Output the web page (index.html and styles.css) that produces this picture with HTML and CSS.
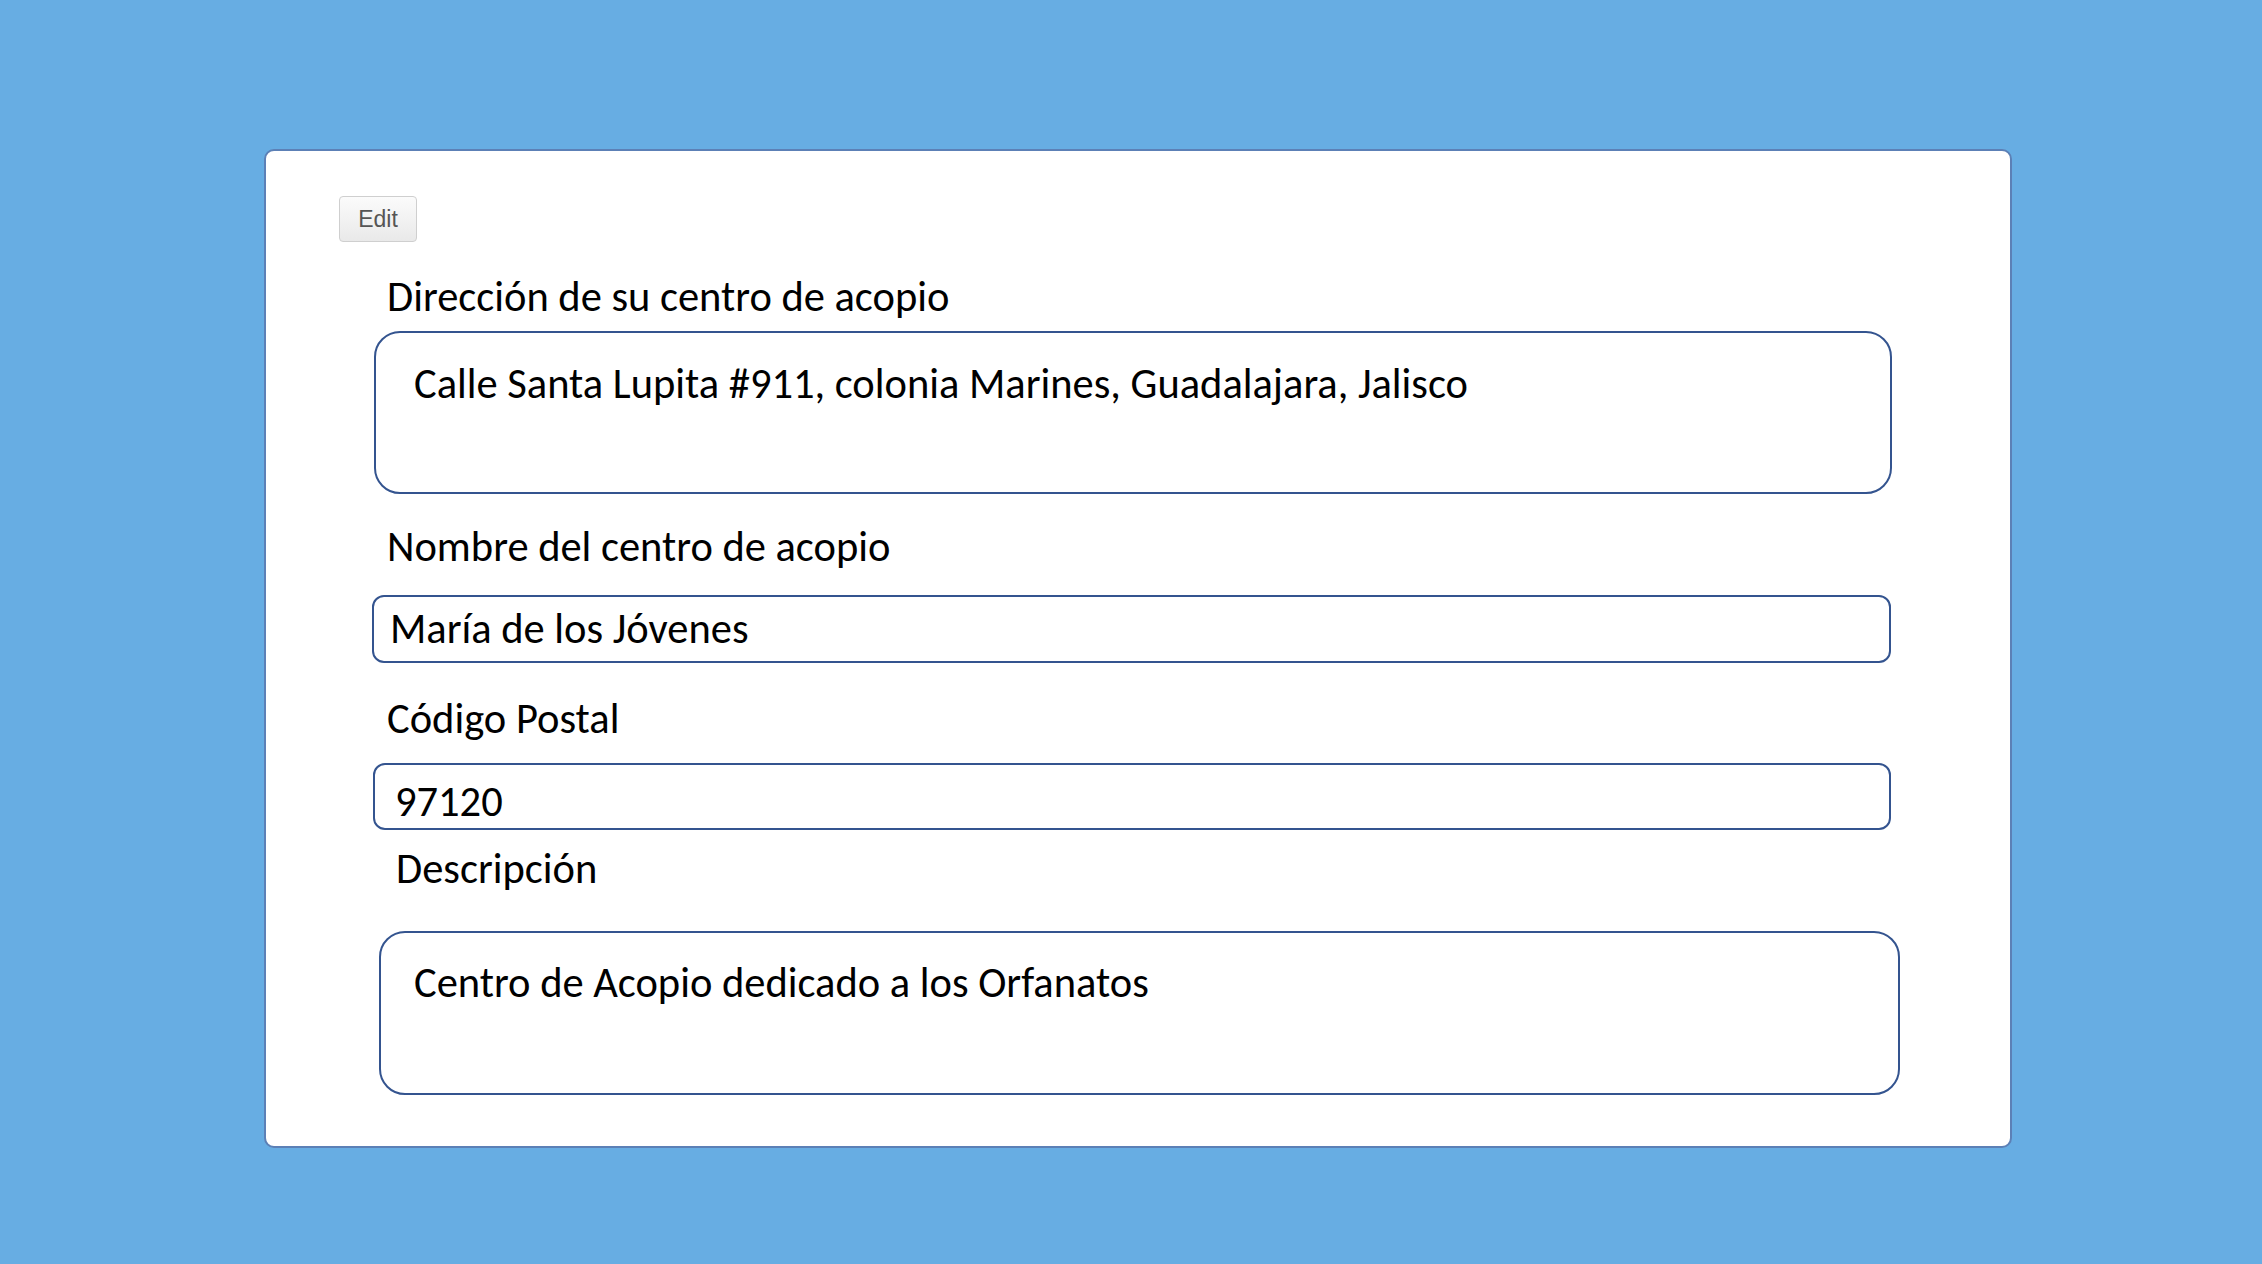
FILE: index.html
```html
<!DOCTYPE html>
<html lang="es">
<head>
<meta charset="utf-8">
<title>Centro de acopio</title>
<link rel="stylesheet" href="styles.css">
</head>
<body>
<main class="card">
  <button class="edit-btn" type="button">Edit</button>
  <div class="label label-1">Dirección de su centro de acopio</div>
  <div class="field field-1">Calle Santa Lupita #911, colonia Marines, Guadalajara, Jalisco</div>
  <div class="label label-2">Nombre del centro de acopio</div>
  <div class="field field-2">María de los Jóvenes</div>
  <div class="label label-3">Código Postal</div>
  <div class="field field-3">97120</div>
  <div class="label label-4">Descripción</div>
  <div class="field field-4">Centro de Acopio dedicado a los Orfanatos</div>
</main>
</body>
</html>
```
FILE: styles.css
```css
* { box-sizing: border-box; }
html, body { margin: 0; padding: 0; }
body {
  background: #67ade3;
  width: 2262px;
  height: 1264px;
  padding-top: 149px;
  padding-left: 264px;
  font-family: Carlito, Lato, "Open Sans", sans-serif;
}
.card {
  width: 1748px;
  height: 999px;
  background: #ffffff;
  border: 2px solid #5c80b6;
  border-radius: 10px;
  display: flex;
  flex-direction: column;
  align-items: flex-start;
}
.edit-btn {
  margin-top: 45px;
  margin-left: 73px;
  width: 78px;
  height: 46px;
  padding: 0;
  font-family: "Liberation Sans", Arial, sans-serif;
  font-size: 23px;
  color: #555555;
  background: linear-gradient(#fbfbfb, #e9e9e9);
  border: 1px solid #cfcfcf;
  border-radius: 4px;
}
.label, .field {
  font-size: 42.5px;
  line-height: 53px;
  color: #000000;
}
.label { height: 50px; margin-left: 121px; white-space: nowrap; }
.field {
  border: 2px solid #34548f;
  white-space: nowrap;
}
.label-1 { margin-top: 28px; }
.field-1 {
  margin-top: 11px;
  margin-left: 108px;
  width: 1518px;
  height: 163px;
  border-radius: 26px;
  padding: 24px 0 0 38px;
}
.label-2 { margin-top: 26px; }
.field-2 {
  margin-top: 25px;
  margin-left: 106px;
  width: 1519px;
  height: 68px;
  border-radius: 12px;
  padding: 5px 0 0 16px;
}
.label-3 { margin-top: 29px; }
.field-3 {
  margin-top: 21px;
  margin-left: 107px;
  width: 1518px;
  height: 67px;
  border-radius: 12px;
  padding: 10px 0 0 20px;
}
.label-4 { margin-top: 12px; margin-left: 130px; }
.field-4 {
  margin-top: 39px;
  margin-left: 113px;
  width: 1521px;
  height: 164px;
  border-radius: 26px;
  padding: 23px 0 0 33px;
}
```
